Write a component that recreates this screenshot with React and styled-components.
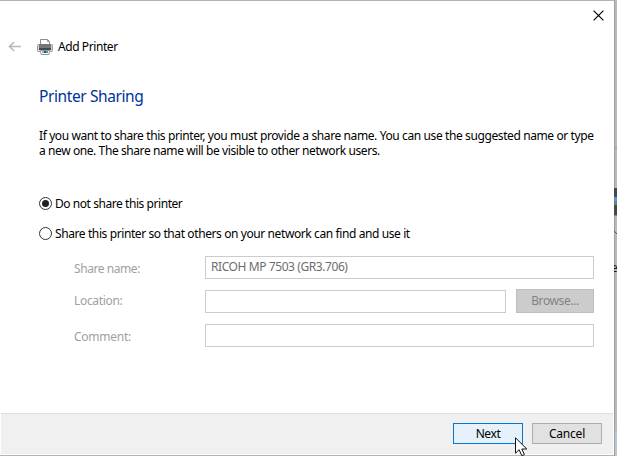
import React from "react";
import styled, { createGlobalStyle } from "styled-components";

const GlobalStyle = createGlobalStyle`
  * { box-sizing: border-box; }
  body { margin: 0; overflow: hidden; }
`;

const Desktop = styled.div`
  position: relative;
  width: 617px;
  height: 456px;
  padding: 1px 3px 1px 0;
  background: #b4b4b4;
  overflow: hidden;
  font-family: "Noto Sans", "Open Sans", sans-serif;
  font-size: 12px;
  line-height: 15px;
  color: #000;
`;

const Dialog = styled.main`
  position: relative;
  display: flex;
  flex-direction: column;
  width: 614px;
  height: 454px;
  background: #fff;
`;

const TitleBar = styled.header`
  display: flex;
  justify-content: flex-end;
  height: 30px;
  padding: 9px 10px 0 0;
`;

const IconButton = styled.button`
  display: block;
  padding: 0;
  border: 0;
  background: none;
  height: ${(p) => p.$h}px;
  svg { display: block; }
`;

const NavRow = styled.div`
  display: flex;
  align-items: center;
  height: 31px;
  padding-left: 8px;
`;

const PrinterSlot = styled.span`
  display: block;
  width: 16px;
  height: 16px;
  margin: 0 5px 0 15px;
  svg { display: block; }
`;

const Label = styled.span`
  white-space: nowrap;
  letter-spacing: ${(p) => p.$ls || 0}px;
`;

const Content = styled.section`
  flex: 1;
  padding: 24px 20px 0 39px;
`;

const Heading = styled.h1`
  margin: 0;
  height: 22px;
  font-size: 15.5px;
  line-height: 21px;
  font-weight: 400;
  color: #003399;
  letter-spacing: ${(p) => p.$ls}px;
`;

const Intro = styled.p`
  display: flex;
  flex-direction: column;
  margin: 20px 0 30px;
`;

const RadioRow = styled.div`
  display: flex;
  align-items: center;
  gap: 3px;
  height: 30px;
`;

const Radio = styled.span`
  display: grid;
  place-items: center;
  width: 13px;
  height: 13px;
  border: 1px solid #333;
  border-radius: 50%;
  &::after {
    content: "";
    width: 7px;
    height: 7px;
    border-radius: 50%;
    background: ${(p) => (p.$checked ? "#222" : "transparent")};
  }
`;

const Fields = styled.div`
  display: grid;
  grid-template-columns: 131px 1fr;
  row-gap: 11px;
  margin-top: 8px;
  padding-left: 35px;
`;

const FieldLabel = styled.span`
  height: 23px;
  padding-top: ${(p) => p.$top}px;
  color: #a0a0a0;
  letter-spacing: ${(p) => p.$ls}px;
`;

const FieldRow = styled.div`
  display: flex;
  gap: 10px;
  height: 23px;
`;

const Field = styled.div`
  flex: 1;
  height: 23px;
  padding: 2px 5px;
  border: 1px solid #ccc;
  color: #6d6d6d;
`;

const buttonLook = {
  primary: { border: "#0078d7", fill: "#e5f1fb", text: "#000" },
  normal: { border: "#adadad", fill: "#e1e1e1", text: "#000" },
  disabled: { border: "#bfbfbf", fill: "#ccc", text: "#838383" },
};

const Button = styled.button`
  width: 70px;
  height: 21px;
  padding: 0;
  border: 1px solid ${(p) => buttonLook[p.$kind].border};
  background: ${(p) => buttonLook[p.$kind].fill};
  color: ${(p) => buttonLook[p.$kind].text};
  font: inherit;
  line-height: 19px;
  letter-spacing: ${(p) => p.$ls}px;
`;

const BrowseButton = styled(Button)`
  width: 78px;
  height: 24px;
  margin-top: -1px;
  line-height: 22px;
`;

const Footer = styled.footer`
  display: flex;
  justify-content: flex-end;
  gap: 9px;
  height: 41px;
  margin: 0 1px 1px;
  padding: 9px 11px 0 0;
  border-top: 1px solid #dfdfdf;
  background: #f0f0f0;
`;

const Pointer = styled.svg`
  position: absolute;
  left: 515px;
  top: 437px;
`;

const Edge = styled.svg`
  position: absolute;
  left: 614px;
  top: 0;
`;

const BackdropText = styled.span`
  position: absolute;
  left: 611px;
  top: 260px;
  color: #0a1a2a;
`;

const Close = () => (
  <svg width="11" height="11" viewBox="0 0 11 11">
    <path d="M.6.6 10.400 10.400M10.400.6.6 10.400" stroke="#000" strokeWidth="1.2" />
  </svg>
);

const Back = () => (
  <svg width="14" height="12" viewBox="0 0 14 12">
    <path d="M6.200 1 1.500 5.500l4.700 4.500M1.500 5.500H13" fill="none" stroke="#b9b9b9" strokeWidth="1.6" />
  </svg>
);

const Printer = () => (
  <svg width="16" height="16" viewBox="0 0 16 16">
    <path d="M3.500 5V.5h7l2 2V5" fill="#fff" stroke="#8c8c8c" />
    <path d="M10.500.5v2h2" fill="none" stroke="#999" />
    <rect x=".5" y="5.500" width="15" height="7" rx="1" fill="#d4d4d4" stroke="#999" />
    <rect x="2" y="5" width="12" height="4" fill="#777" />
    <rect x="2" y="9" width="12" height="2" fill="#484848" />
    <path d="M3.500 11.500h9l-.5 4H4z" fill="#fff" stroke="#999" />
    <path d="M5 12h2v2H5z" fill="#78bddb" />
    <path d="M7 12h2v2H7z" fill="#175b8d" />
    <path d="M9 12h2v2H9z" fill="#32a3c0" />
  </svg>
);

export default function App() {
  return (
    <Desktop>
      <GlobalStyle />
      <Edge width="3" height="456">
        <path d="M0 0h3v431H0z" fill="#b9b9b9" />
        <path d="M0 431h3v25H0z" fill="#bcc6ce" />
        <path d="M.5 0v456" stroke="#a0a0a0" />
        <path d="M0 147.500h3" stroke="#999" />
        <path d="M0 188h3v27H0z" fill="#46494c" />
        <path d="M0 194h3v3H0z" fill="#34516e" />
        <path d="M0 197h3v4H0z" fill="#5c8fd6" />
        <path d="M0 201h3v4H0z" fill="#6d8577" />
        <path d="M0 215.500h3" stroke="#888" />
        <path d="M0 231l3 3" stroke="#555" />
      </Edge>
      <BackdropText>e</BackdropText>
      <Dialog>
        <TitleBar>
          <IconButton $h={11} aria-label="Close"><Close /></IconButton>
        </TitleBar>
        <NavRow>
          <IconButton $h={12} aria-label="Back"><Back /></IconButton>
          <PrinterSlot><Printer /></PrinterSlot>
          <Label $ls={-0.42}>Add Printer</Label>
        </NavRow>
        <Content>
          <Heading $ls={-0.4}>Printer Sharing</Heading>
          <Intro>
            <Label $ls={-0.394}>If you want to share this printer, you must provide a share name. You can use the suggested name or type</Label>
            <Label $ls={-0.41}>a new one. The share name will be visible to other network users.</Label>
          </Intro>
          <RadioRow><Radio $checked /><Label $ls={-0.44}>Do not share this printer</Label></RadioRow>
          <RadioRow><Radio /><Label $ls={-0.4}>Share this printer so that others on your network can find and use it</Label></RadioRow>
          <Fields>
            <FieldLabel $top={5} $ls={-0.43}>Share name:</FieldLabel>
            <FieldRow><Field><Label $ls={-0.42}>RICOH MP 7503 (GR3.706)</Label></Field></FieldRow>
            <FieldLabel $top={3} $ls={-0.33}>Location:</FieldLabel>
            <FieldRow><Field /><BrowseButton $kind="disabled" $ls={-0.4}>Browse...</BrowseButton></FieldRow>
            <FieldLabel $top={5} $ls={-0.25}>Comment:</FieldLabel>
            <FieldRow><Field /></FieldRow>
          </Fields>
        </Content>
        <Footer>
          <Button $kind="primary" $ls={-0.4}>Next</Button>
          <Button $kind="normal" $ls={-0.2}>Cancel</Button>
        </Footer>
      </Dialog>
      <Pointer width="13" height="19" viewBox="0 0 13 19">
        <path d="M.5.8v15.400l3.600-3.500 2.700 6 2.600-1.200-2.600-5.500h5z" fill="#fff" stroke="#111" />
      </Pointer>
    </Desktop>
  );
}
